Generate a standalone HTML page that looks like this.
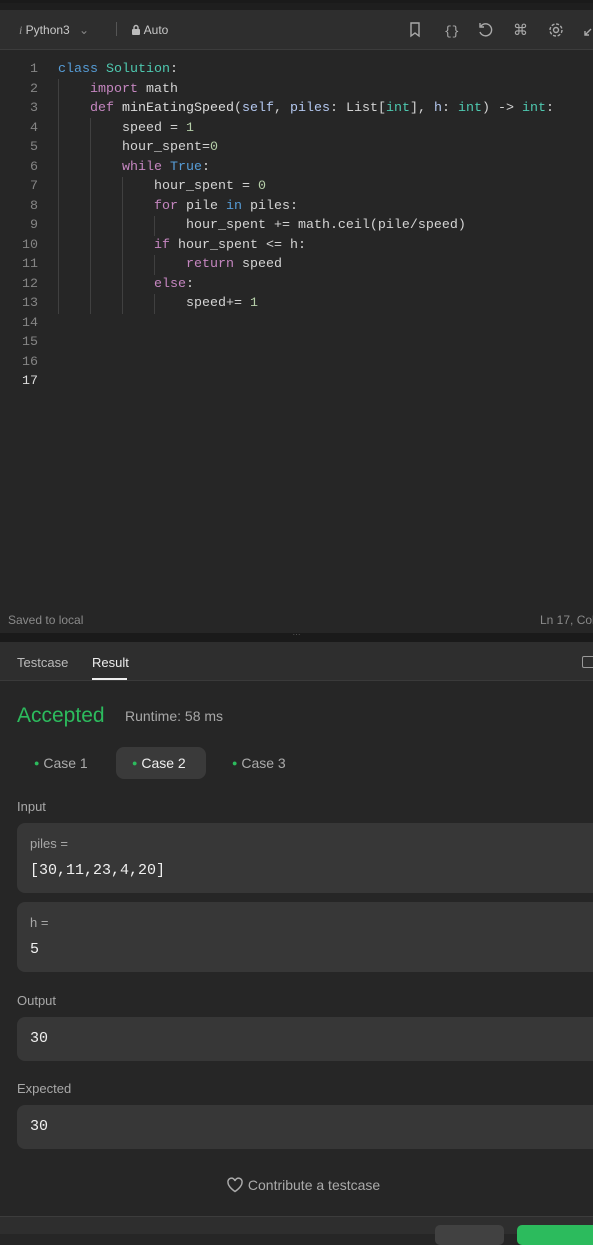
<!DOCTYPE html>
<html><head><style>
*{margin:0;padding:0;box-sizing:border-box}
body{width:593px;height:1234px;overflow:hidden;background:#262626;font-family:"Liberation Sans",sans-serif;position:relative;color:#ddd}
.abs{position:absolute}
.code{font-family:"Liberation Mono",monospace;font-size:13.33px;white-space:pre;color:#d4d4d4}
.k{color:#c586c0}.b{color:#569cd6}.t{color:#4ec9b0}.f{color:#dcdcdc}.p{color:#b4c8f0}.n{color:#b5cea8}
.card{position:absolute;left:17px;width:590px;background:#373737;border-radius:8px}
.lbl{font-size:13px;color:#a8a8a8}
.val{font-family:"Liberation Mono",monospace;font-size:15px;color:#f0f0f0}
.guide{position:absolute;width:1px;background:#404040}
</style></head><body>
<div class="abs" style="left:0;top:0;width:593px;height:3px;background:#1a1a1a"></div>
<div class="abs" style="left:0;top:3px;width:593px;height:7px;background:#1e1e1e"></div>
<div class="abs" style="left:0;top:10px;width:593px;height:40px;background:#2e2e2e;border-bottom:1px solid #3c3c3c"></div>
<div class="abs" style="left:19px;top:23px;font-size:12px;color:#c8c8c8"><i style="color:#999;font-family:'Liberation Serif',serif">i</i> Python3 <span style="color:#888;margin-left:6px">&#8964;</span></div>
<div class="abs" style="left:116px;top:22px;width:1px;height:14px;background:#555"></div>
<div class="abs" style="left:131px;top:23px;font-size:12px;color:#c8c8c8"><svg width="10" height="11" viewBox="0 0 10 11" style="vertical-align:-1px"><rect x="1" y="5" width="8" height="6" rx="1" fill="#bbb"/><path d="M3 5V3.5a2 2 0 0 1 4 0V5" stroke="#bbb" fill="none" stroke-width="1.4"/></svg> Auto</div>
<svg class="abs" style="left:405px;top:21px" width="190" height="18" viewBox="0 0 190 18" fill="none" stroke="#aaa" stroke-width="1.4">
<path d="M6 2h8v13l-4-3-4 3z"/>
<text x="39" y="14" fill="#aaa" stroke="none" font-size="13" font-family="Liberation Mono">{}</text>
<path d="M76 5a6 6 0 1 1-1 6M75 2v4h4"/>
<text x="108" y="14" fill="#aaa" stroke="none" font-size="15" font-family="DejaVu Sans">⌘</text>
<circle cx="151" cy="9" r="2.5"/><circle cx="151" cy="9" r="6" stroke-dasharray="3 1.7"/>
<path d="M180 14l6-6M180 10v4h4"/>
</svg>
<div class="guide" style="left:58px;top:79px;height:235px"></div>
<div class="guide" style="left:90px;top:118px;height:196px"></div>
<div class="guide" style="left:122px;top:177px;height:137px"></div>
<div class="guide" style="left:154px;top:216px;height:20px"></div>
<div class="guide" style="left:154px;top:255px;height:20px"></div>
<div class="guide" style="left:154px;top:294px;height:20px"></div>
<div class="code abs" style="left:58px;top:60px;line-height:19.5px"><span class="b">class</span> <span class="t">Solution</span>:
    <span class="k">import</span> math
    <span class="k">def</span> <span class="f">minEatingSpeed</span>(<span class="p">self</span>, <span class="p">piles</span>: List[<span class="t">int</span>], <span class="p">h</span>: <span class="t">int</span>) -&gt; <span class="t">int</span>:
        speed = <span class="n">1</span>
        hour_spent=<span class="n">0</span>
        <span class="k">while</span> <span class="b">True</span>:
            hour_spent = <span class="n">0</span>
            <span class="k">for</span> pile <span class="b">in</span> piles:
                hour_spent += math.ceil(pile/speed)
            <span class="k">if</span> hour_spent &lt;= h:
                <span class="k">return</span> speed
            <span class="k">else</span>:
                speed+= <span class="n">1</span></div>
<div class="abs" style="left:0;top:60px;width:38px;line-height:19.5px;text-align:right;font-family:'Liberation Mono',monospace;font-size:13.33px;color:#858585;white-space:pre">1
2
3
4
5
6
7
8
9
10
11
12
13
14
15
16
<span style="color:#ddd">17</span></div>
<div class="abs" style="left:8px;top:613px;font-size:12px;color:#8a8a8a">Saved to local</div>
<div class="abs" style="left:540px;top:613px;font-size:12px;color:#8a8a8a;white-space:nowrap">Ln 17, Col</div>
<div class="abs" style="left:0;top:633px;width:593px;height:9px;background:#1a1a1a;text-align:center;font-size:8px;line-height:4px;color:#666">&middot;&middot;&middot;</div>
<div class="abs" style="left:0;top:642px;width:593px;height:39px;background:#2e2e2e;border-bottom:1px solid #3a3a3a"></div>
<div class="abs" style="left:17px;top:655px;font-size:13px;color:#bbb">Testcase</div>
<div class="abs" style="left:92px;top:655px;font-size:13px;color:#eee">Result</div>
<div class="abs" style="left:92px;top:678px;width:35px;height:2px;background:#eee"></div>
<div class="abs" style="left:582px;top:656px;width:14px;height:12px;border:1.4px solid #999;border-radius:2px"></div>
<div class="abs" style="left:17px;top:704px;font-size:21px;color:#2cbb5d">Accepted</div>
<div class="abs" style="left:125px;top:708px;font-size:14px;color:#a8a8a8">Runtime: 58 ms</div>
<div class="abs" style="left:116px;top:747px;width:90px;height:32px;background:#3a3a3a;border-radius:8px"></div>
<div class="abs" style="left:34px;top:755px;font-size:14px;color:#aaa"><span style="color:#2cbb5d;font-size:9px;vertical-align:2px">●</span> Case 1</div>
<div class="abs" style="left:132px;top:755px;font-size:14px;color:#eee"><span style="color:#2cbb5d;font-size:9px;vertical-align:2px">●</span> Case 2</div>
<div class="abs" style="left:232px;top:755px;font-size:14px;color:#aaa"><span style="color:#2cbb5d;font-size:9px;vertical-align:2px">●</span> Case 3</div>
<div class="abs lbl" style="left:17px;top:799px">Input</div>
<div class="card" style="top:823px;height:70px"><div class="abs lbl" style="left:13px;top:13px">piles =</div><div class="abs val" style="left:13px;top:39px">[30,11,23,4,20]</div></div>
<div class="card" style="top:902px;height:70px"><div class="abs lbl" style="left:13px;top:13px">h =</div><div class="abs val" style="left:13px;top:39px">5</div></div>
<div class="abs lbl" style="left:17px;top:993px">Output</div>
<div class="card" style="top:1017px;height:44px"><div class="abs val" style="left:13px;top:13px">30</div></div>
<div class="abs lbl" style="left:17px;top:1081px">Expected</div>
<div class="card" style="top:1105px;height:44px"><div class="abs val" style="left:13px;top:13px">30</div></div>
<div class="abs" style="left:226px;top:1177px;font-size:14px;color:#aaa"><svg width="18" height="16" viewBox="0 0 18 16" style="vertical-align:-3px"><path d="M9 14.5S2 10 2 5.5A3.5 3.5 0 0 1 9 4a3.5 3.5 0 0 1 7 1.5C16 10 9 14.5 9 14.5z" fill="none" stroke="#aaa" stroke-width="1.5"/></svg> Contribute a testcase</div>
<div class="abs" style="left:0;top:1216px;width:593px;height:18px;background:#2e2e2e;border-top:1px solid #3c3c3c"></div>
<div class="abs" style="left:435px;top:1225px;width:69px;height:20px;background:#414141;border-radius:5px"></div>
<div class="abs" style="left:517px;top:1225px;width:90px;height:20px;background:#2cbb5d;border-radius:5px"></div>
</body></html>
